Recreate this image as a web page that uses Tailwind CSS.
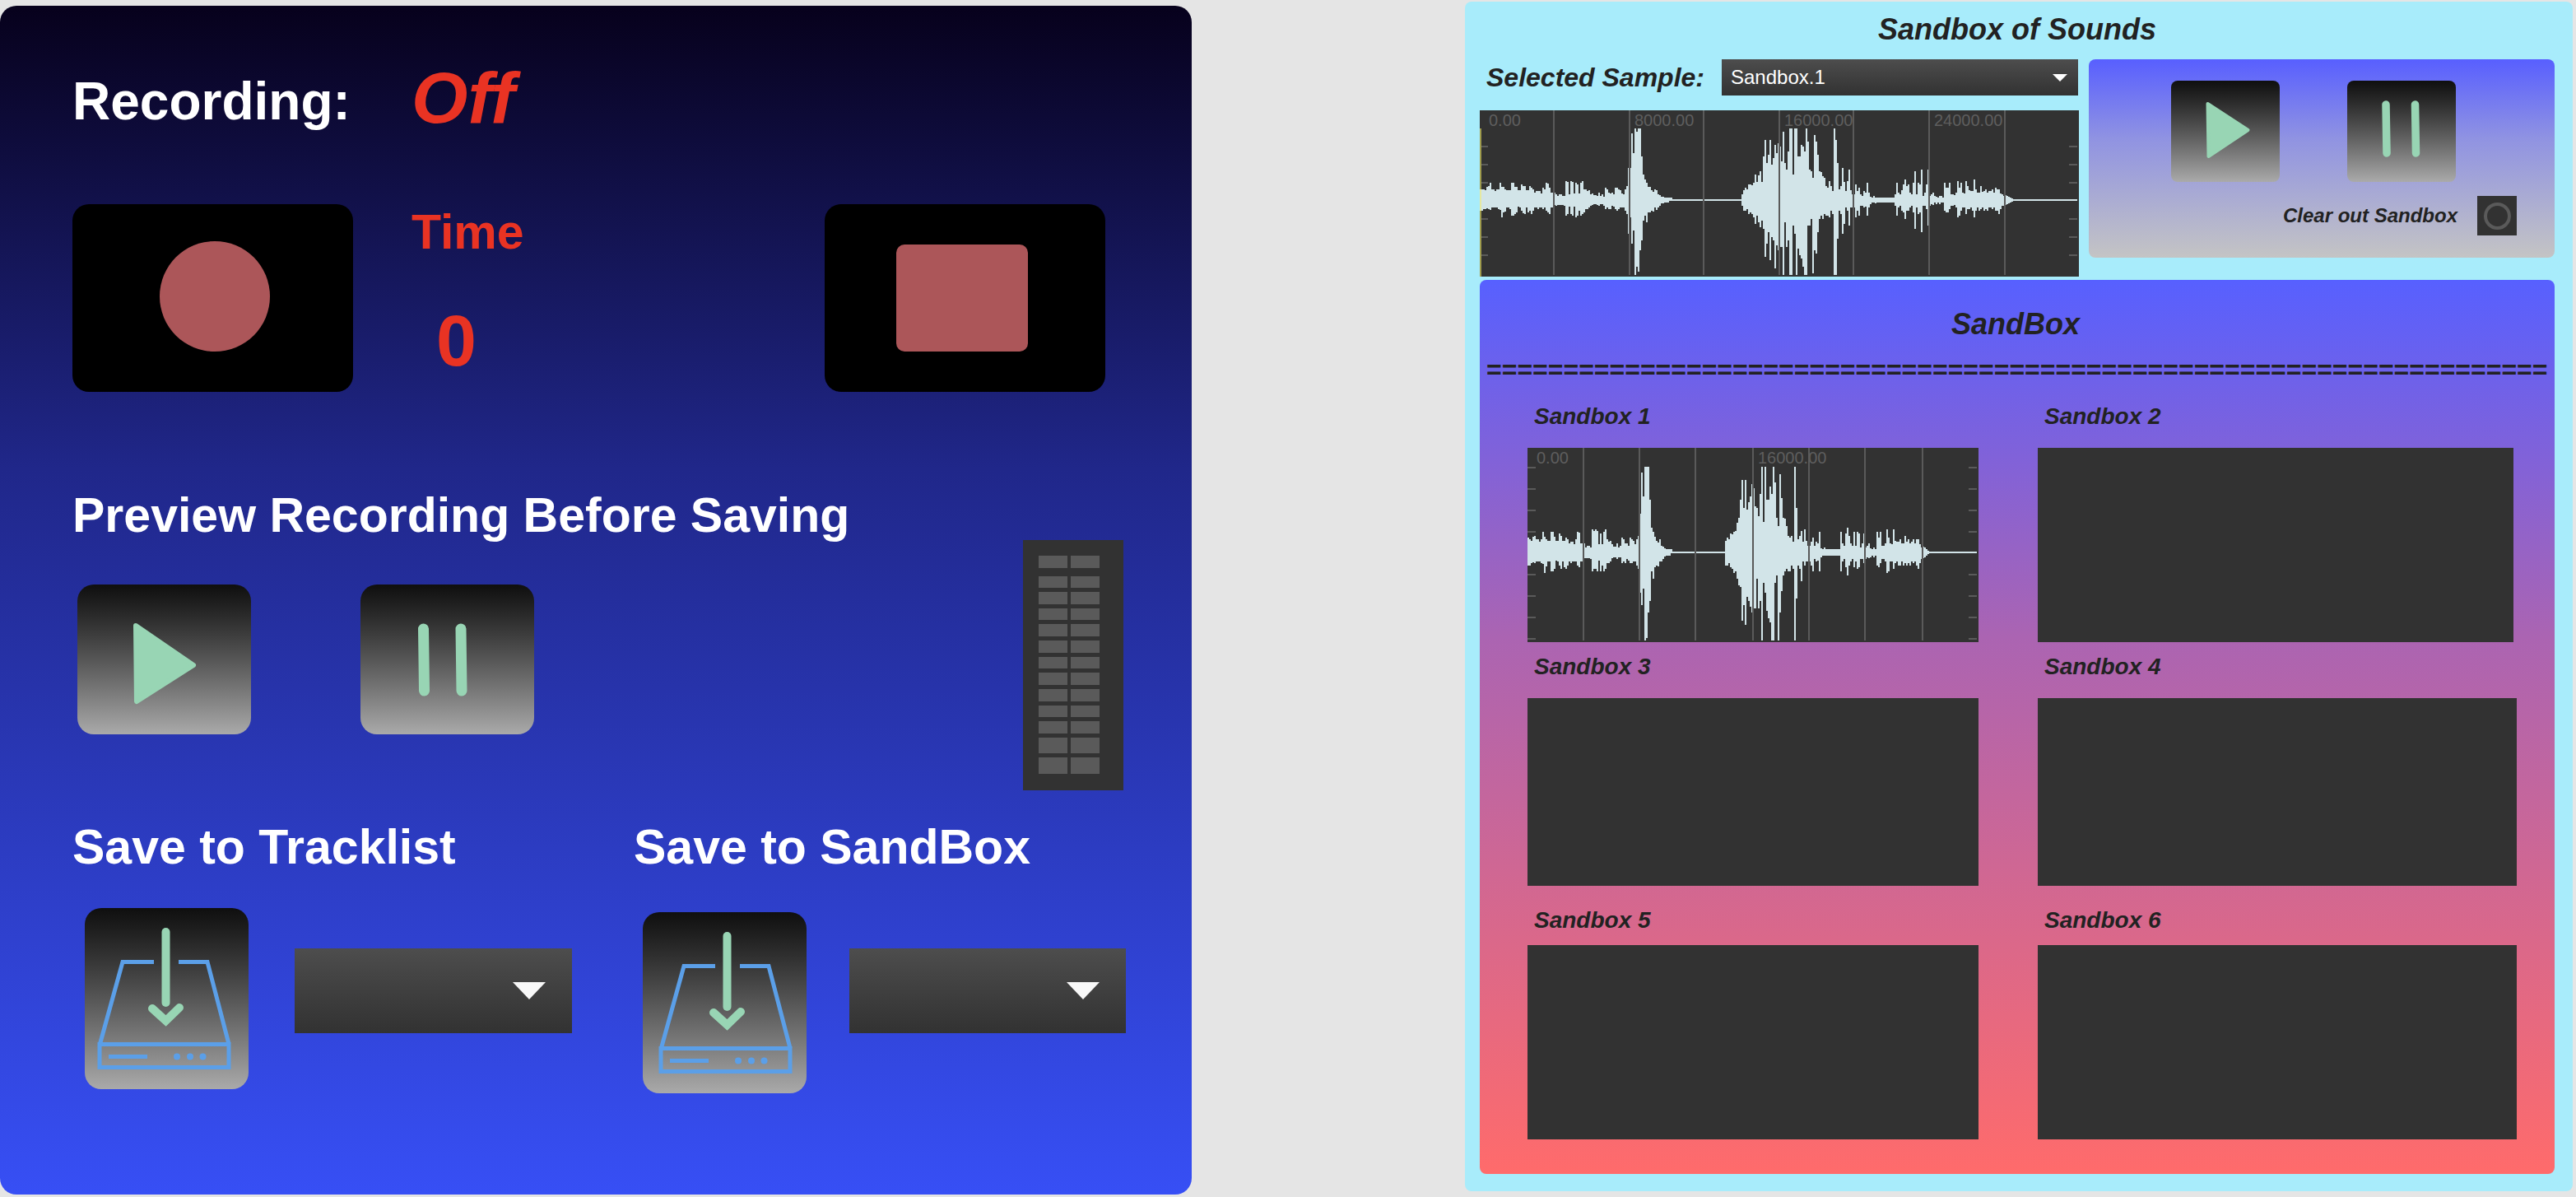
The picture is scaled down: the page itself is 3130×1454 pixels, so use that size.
<!DOCTYPE html>
<html lang="en">
<head>
<meta charset="utf-8">
<meta name="viewport" content="width=device-width, initial-scale=1">
<title>Sandbox of Sounds</title>
<script src="https://cdn.jsdelivr.net/npm/@tailwindcss/browser@4"></script>
</head>
<body class="bg-[#e5e5e5] font-['Liberation_Sans',Arial,sans-serif]">

<svg class="hidden" aria-hidden="true">
  <symbol id="icon-play" viewBox="0 0 211 182" preserveAspectRatio="none">
    <path d="M71 50 L141 98 L72 142 Z" fill="#98d5b4" stroke="#98d5b4" stroke-width="6" stroke-linejoin="round"/>
  </symbol>
  <symbol id="icon-pause" viewBox="0 0 211 182" preserveAspectRatio="none">
    <path d="M76.500 54 L77.500 129 M122 54 L123 129" fill="none" stroke="#98d5b4" stroke-width="13" stroke-linecap="round"/>
  </symbol>
  <symbol id="icon-play-sm" viewBox="0 0 131 123">
    <path d="M44 28 L93 60 L45 92 Z" fill="#98d5b4" stroke="#98d5b4" stroke-width="4" stroke-linejoin="round"/>
  </symbol>
  <symbol id="icon-pause-sm" viewBox="0 0 131 123">
    <path d="M46.500 29 L47.500 88 M82 29 L83 88" fill="none" stroke="#98d5b4" stroke-width="9.500" stroke-linecap="round"/>
  </symbol>
  <symbol id="icon-save" viewBox="0 0 199 220">
    <g fill="none" stroke="#5b9fe8" stroke-width="5">
      <path d="M84 65.500 H46 L18.500 165 M114 65.500 H149 L175 165"/>
      <rect x="18" y="165.500" width="157" height="28"/>
      <path d="M29 180.500 H76"/>
    </g>
    <g fill="#5b9fe8"><circle cx="112" cy="180.500" r="4"/><circle cx="128" cy="180.500" r="4"/><circle cx="143.500" cy="180.500" r="4"/></g>
    <path d="M98.500 29 V115" fill="none" stroke="#98d5b4" stroke-width="10" stroke-linecap="round"/>
    <path d="M82 122 L98.500 137 L115 121" fill="none" stroke="#98d5b4" stroke-width="10" stroke-linecap="round"/>
  </symbol>
</svg>

<div class="grid min-h-screen grid-cols-[1448fr_1346fr] gap-x-[332px] pr-1">

  <!-- Recorder -->
  <section class="mt-[7px] mb-[3px] rounded-[20px] bg-[linear-gradient(to_bottom,#07011c_0%,#20278a_39%,#374ff5_100%)] pt-[72px] pr-20 pl-[88px] font-bold text-white" aria-label="Recorder">
    <div class="flex items-end">
      <h2 class="w-[412px] text-[64px] leading-[72px]">Recording:</h2>
      <output class="text-[88px] leading-[80px] text-[#e93323] italic">Off</output>
    </div>

    <div class="mt-[89px] flex h-[228px] items-stretch pr-[25px]">
      <button type="button" aria-label="Record" class="flex w-[341px] items-center justify-center rounded-[20px] bg-black">
        <svg class="size-[140px]" viewBox="0 0 140 140"><circle cx="72" cy="68" r="67" fill="#ac5659"/></svg>
      </button>
      <div class="flex-1 pt-1 pl-[71px] text-[#e93323]">
        <div class="text-[59px] leading-[60px]">Time</div>
        <div class="mt-[58px] pl-[30px] text-[88px] leading-[88px]">0</div>
      </div>
      <button type="button" aria-label="Stop" class="flex w-[341px] items-center justify-center rounded-[20px] bg-black">
        <span class="mr-2 h-[130px] w-[160px] rounded-[10px] bg-[#ac5659]"></span>
      </button>
    </div>

    <div class="mt-[120px] flex justify-between pr-[3px]">
      <div>
        <h2 class="text-[59px] leading-[60px]">Preview Recording Before Saving</h2>
        <div class="mt-[54px] flex gap-[133px] pl-[6px]">
          <button type="button" aria-label="Play preview" class="h-[182px] w-[211px] rounded-[20px] bg-linear-to-b from-[#0f0f0f] to-[#aaaaaa]"><svg class="size-full"><use href="#icon-play"/></svg></button>
          <button type="button" aria-label="Pause preview" class="h-[182px] w-[211px] rounded-[20px] bg-linear-to-b from-[#0f0f0f] to-[#aaaaaa]"><svg class="size-full"><use href="#icon-pause"/></svg></button>
        </div>
      </div>
      <div id="meter" role="img" aria-label="Level meter" class="mt-[60px] grid h-[304px] w-[122px] grid-cols-[35px_35px] grid-rows-[20fr_repeat(10,15fr)_20fr_20fr] gap-x-1 gap-y-[5px] bg-[#323232] pt-[19px] pb-5 pl-[19px]"></div>
    </div>

    <div class="mt-[39px] grid grid-cols-[682fr_598fr]">
      <div>
        <h2 id="to-tracklist" class="text-[59px] leading-[60px]">Save to Tracklist</h2>
        <div class="mt-11 flex gap-[56px] pl-[15px]">
          <button type="button" aria-label="Save to Tracklist" class="h-[220px] w-[199px] rounded-[20px] bg-linear-to-b from-[#0f0f0f] to-[#aaaaaa]"><svg class="size-full"><use href="#icon-save"/></svg></button>
          <div class="relative mt-[49px] h-[103px] w-[337px]">
            <select aria-labelledby="to-tracklist" class="size-full appearance-none bg-linear-to-b from-[#4d4d4d] to-[#323232]"><option></option></select>
            <svg class="pointer-events-none absolute top-[41px] right-8 h-[21px] w-10" viewBox="0 0 40 21"><path d="M0 0 H40 L20 21 Z" fill="#f8f8f8"/></svg>
          </div>
        </div>
      </div>
      <div>
        <h2 id="to-sandbox" class="text-[59px] leading-[60px]">Save to SandBox</h2>
        <div class="mt-[49px] flex gap-[52px] pl-[11px]">
          <button type="button" aria-label="Save to SandBox" class="h-[220px] w-[199px] rounded-[20px] bg-linear-to-b from-[#0f0f0f] to-[#aaaaaa]"><svg class="size-full" viewBox="-4 0 199 220"><use href="#icon-save" width="199" height="220"/></svg></button>
          <div class="relative mt-11 h-[103px] w-[336px]">
            <select aria-labelledby="to-sandbox" class="size-full appearance-none bg-linear-to-b from-[#4d4d4d] to-[#323232]"><option></option></select>
            <svg class="pointer-events-none absolute top-[41px] right-8 h-[21px] w-10" viewBox="0 0 40 21"><path d="M0 0 H40 L20 21 Z" fill="#f8f8f8"/></svg>
          </div>
        </div>
      </div>
    </div>
  </section>

  <!-- Sandbox -->
  <section class="mt-[2px] mb-[7px] rounded-lg bg-[#a8ecfb] pt-[14px] pr-[22px] pl-[18px] font-bold text-[#222222] italic" aria-label="Sandbox of Sounds">
    <h1 class="text-center text-[36px] leading-10">Sandbox of Sounds</h1>

    <div class="mt-4 grid grid-cols-[728fr_566fr] items-start gap-3">
      <div>
        <div class="flex h-11 items-center pr-px">
          <label for="sample" class="pr-[21px] pl-2 text-[32px] leading-9">Selected Sample:</label>
          <div class="relative h-11 flex-1">
            <select id="sample" class="size-full appearance-none bg-linear-to-b from-[#4d4d4d] to-[#323232] pl-[11px] text-[24px] font-normal text-white not-italic"><option>Sandbox.1</option></select>
            <svg class="pointer-events-none absolute top-[18px] right-[13px] h-[9px] w-[18px]" viewBox="0 0 18 9"><path d="M0 0 H18 L9 9 Z" fill="#ffffff"/></svg>
          </div>
        </div>
        <div class="relative mt-[18px] h-[202px] bg-[#323232] text-[20px] leading-6 font-normal text-[#5e5e5e] not-italic">
          <svg id="wave-main" class="size-full" viewBox="0 0 728 202" preserveAspectRatio="none" shape-rendering="crispEdges" role="img" aria-label="Waveform of Sandbox.1"></svg>
          <span class="absolute top-0 left-[11px]">0.00</span>
          <span class="absolute top-0 left-[188px]">8000.00</span>
          <span class="absolute top-0 left-[370px]">16000.00</span>
          <span class="absolute top-0 left-[552px]">24000.00</span>
        </div>
      </div>

      <div class="h-[241px] rounded-lg bg-[linear-gradient(to_bottom,#585fff_0%,#9093e2_40%,#c4c4c4_100%)] pt-[26px]">
        <div class="flex gap-[82px] pl-[100px]">
          <button type="button" aria-label="Play sandbox" class="h-[123px] w-[132px] rounded-lg bg-linear-to-b from-[#0f0f0f] to-[#aaaaaa]"><svg class="size-full"><use href="#icon-play-sm"/></svg></button>
          <button type="button" aria-label="Pause sandbox" class="h-[123px] w-[132px] rounded-lg bg-linear-to-b from-[#0f0f0f] to-[#aaaaaa]"><svg class="size-full"><use href="#icon-pause-sm"/></svg></button>
        </div>
        <div class="mt-[17px] flex items-center justify-end gap-6 pr-[46px]">
          <span id="clear-label" class="text-[24px] leading-7">Clear out Sandbox</span>
          <button type="button" aria-labelledby="clear-label" class="flex size-12 items-center justify-center bg-[#323232]"><span class="size-[33px] rounded-full border-4 border-[#5a5a5a]"></span></button>
        </div>
      </div>
    </div>

    <div class="mt-1 rounded-lg bg-[linear-gradient(to_bottom,#5760ff_0%,#ab64b2_40%,#ff6b6b_100%)] pt-[34px] pb-[42px]">
      <h2 class="pr-1 text-center text-[36px] leading-10">SandBox</h2>
      <div aria-hidden="true" class="mt-[19px] pl-2 text-[32px] leading-8 whitespace-nowrap not-italic">=====================================================================</div>
      <div class="mt-[27px] grid grid-cols-[548fr_582fr] gap-x-[72px] pr-[46px] pl-[58px] text-[28px] leading-7">
        <div>
          <h3 class="pl-2">Sandbox 1</h3>
          <div class="relative mt-6 h-[236px] bg-[#323232] text-[20px] leading-6 font-normal text-[#5e5e5e] not-italic">
            <svg id="wave-slot" class="size-full" viewBox="0 0 548 236" preserveAspectRatio="none" shape-rendering="crispEdges" role="img" aria-label="Waveform in Sandbox 1"></svg>
            <span class="absolute top-0 left-[11px]">0.00</span>
            <span class="absolute top-0 left-[280px]">16000.00</span>
          </div>
        </div>
        <div>
          <h3 class="pl-2">Sandbox 2</h3>
          <div class="mt-6 mr-1 h-[236px] bg-[#323232]"></div>
        </div>
        <div class="mt-4">
          <h3 class="pl-2">Sandbox 3</h3>
          <div class="mt-6 h-[228px] bg-[#323232]"></div>
        </div>
        <div class="mt-4">
          <h3 class="pl-2">Sandbox 4</h3>
          <div class="mt-6 h-[228px] bg-[#323232]"></div>
        </div>
        <div class="mt-7">
          <h3 class="pl-2">Sandbox 5</h3>
          <div class="mt-4 h-[236px] bg-[#323232]"></div>
        </div>
        <div class="mt-7">
          <h3 class="pl-2">Sandbox 6</h3>
          <div class="mt-4 h-[236px] bg-[#323232]"></div>
        </div>
      </div>
    </div>
  </section>
</div>

<script>
  // Level meter: 13 segments per channel, with a clip segment on top.
  const meter = document.getElementById('meter');
  for (let r = 0; r < 13; r++) {
    for (let c = 0; c < 2; c++) {
      const cell = document.createElement('span');
      cell.className = r === 0 ? 'mb-[5px] bg-[#5a5a5a]' : 'bg-[#5a5a5a]';
      meter.appendChild(cell);
    }
  }

  // Sample peaks above and below the zero line; each run starts at the given column.
  const COLUMNS = 363;
  const UP = [
    [0, '15 13 13 12 16 17 21 13 13 11 13 13 21 16 16 13 12 12 12 21 21 16 16 12 12 19 17 17 12 12 17 15 13 9 11 11 11 8 15 13 21 20 15 9 9 9 7 5 7 7 5 5 23 22 7 23 22 8 21 19 8 21 23 13 13 11 12 7 8 6 6 5 9 5 7 4 15 13 9 8 9 7 15 15 13 12 8 7 13 17 39 39 81 57 87 83 87 87 53 31 25 21 16 16 12 10 13 12 7 6 4 4 3 3 3 3 3'],
    [159, '7 12 15 13 19 19 18 21 31 22 30 35 22 53 73 45 55 73 43 51 67 57 69'],
    [182, '65 47 83 45 37 59 87 87 31 87 87 53 53 67 65 59 87 71 37 35 27 79 71 55 35 34 29 27 17 15 23 17 11 87 73 45 13 17 39 22 11 23 37 12 7 7 19 11 15 7 5 11 9 21 9 4 3 5 3 3 3 3 3 3 3 3 3 3 3 3'],
    [252, '7 21 9 7 12 19 25 17 19 9 7 21 35 7 21 19 37 5 9 19 37 5 7 9 5 4 3 5 5 3 21 15 15 21 7 7 6 9 23 15 21 9 8 23 17 12 11 11 25 13 9 9 17 10 11 13 9 11 11 13 9 15 13 13 8 7 5 6 5 4 3 2']
  ];
  const DOWN = [
    [0, '13 13 11 11 10 11 12 9 9 9 9 11 12 21 15 14 9 9 11 19 19 17 15 8 9 13 16 17 9 15 13 17 13 9 9 11 9 9 11 9 13 15 17 9 9 6 7 6 6 6 6 7 19 17 8 17 19 8 21 19 13 19 17 15 11 11 9 7 6 5 5 6 7 5 5 7 11 9 11 11 7 8 11 13 11 9 9 9 13 17 41 21 53 37 91 81 87 61 49 25 19 27 15 15 13 14 9 12 9 7 4 4 3 3 3'],
    [159, '7 13 13 11 17 15 17 21 29 19 27 33 25 35 69 53 39 73 45 49 83 55 61'],
    [182, '57 57 91 27 57 49 91 91 31 41 91 59 67 71 81 91 91 31 31 23 89 61 65 39 23 19 23 17 19 19 21 13 17 91 91 47 13 17 41 29 9 13 31 9 9 9 21 13 19 7 7 9 8 19 9 5 3 3 4 3 3 3 3 3 3 3 3 3 3 3'],
    [252, '7 19 9 7 13 15 23 13 13 9 7 15 35 9 17 15 39 7 7 11 31 7 5 6 3 5 3 5 3 3 13 15 15 11 7 7 6 9 21 19 13 9 9 17 11 11 9 13 21 13 9 13 11 9 13 11 13 9 9 11 9 13 13 17 11 7 7 6 5 4 3 2']
  ];

  function expand(runs) {
    const out = new Array(COLUMNS).fill(1);
    for (const [start, text] of runs) text.split(' ').forEach((v, i) => { out[start + i] = +v; });
    return out;
  }

  function drawWave(id, o) {
    const up = expand(UP), down = expand(DOWN);
    const n = Math.floor((o.width - 2) / 2);
    const step = COLUMNS / n;
    let wave = '';
    for (let i = 0; i < n; i++) {
      const k = Math.min(COLUMNS - 1, Math.round(i * step));
      const u = Math.min(o.maxUp, Math.round(up[k] * o.gain));
      const d = Math.min(o.maxDown, Math.round(down[k] * o.gain));
      wave += `M${i * 2} ${o.mid - u}h2V${o.mid + d}h-2z`;
    }
    const grid = o.grid.map(x => `M${x} 0h2V${o.height - 2}h-2z`).join('');
    const ticks = o.ticks.map(y => `M0 ${y - 1}h10v2h-10zM${o.width - 12} ${y - 1}h10v2h-10z`).join('');
    document.getElementById(id).innerHTML =
      `<path d="${ticks}" fill="#5a5a5a"/><path d="${wave}" fill="#d2e4e8"/><path d="${grid}" fill="#5a5a5a"/>` +
      (o.cursor ? `<path d="M0 22h2V202h-2z" fill="#a09c4e"/><path d="M0 96h2v26h-2z" fill="#e6e8a0"/>` : '');
  }

  drawWave('wave-main', { width: 728, height: 202, mid: 109, gain: 1, maxUp: 87, maxDown: 91, cursor: true,
    grid: [89, 181, 271, 363, 453, 545, 637], ticks: [44, 66, 88, 132, 154, 176] });
  drawWave('wave-slot', { width: 548, height: 236, mid: 127, gain: 1.2, maxUp: 105, maxDown: 107, cursor: false,
    grid: [67, 135, 203, 273, 341, 409, 479], ticks: [24, 50, 76, 102, 154, 180, 206, 232] });
</script>
</body>
</html>
